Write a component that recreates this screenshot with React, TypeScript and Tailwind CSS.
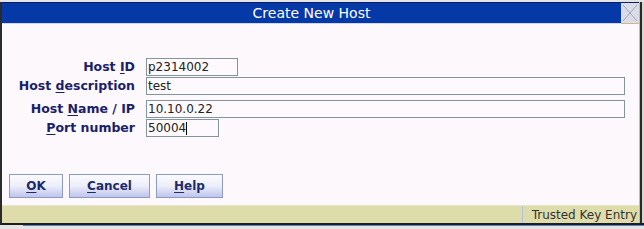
import React from "react";

const font = { fontFamily: '"DejaVu Sans", Verdana, sans-serif' };

function Label({ pre, u, post }: { pre: string; u: string; post: string }) {
  return (
    <div className="w-[133px] text-right text-[12.5px] font-bold text-[#1a1f6b] leading-none whitespace-nowrap">
      {pre}
      <span className="underline underline-offset-2">{u}</span>
      {post}
    </div>
  );
}

function Field({ w, value, cursor }: { w: string; value: string; cursor?: boolean }) {
  return (
    <div
      className={`${w} h-[18px] border border-[#83959a] bg-[#fdf9fd] flex items-center pl-[1px] text-[12px] text-[#222] leading-none`}
    >
      <span>{value}</span>
      {cursor && <span className="inline-block w-[1px] h-[13px] bg-black" />}
    </div>
  );
}

function Btn({ w, u, rest }: { w: string; u: string; rest: string }) {
  return (
    <div
      className={`${w} h-[24px] border border-[#8c9cc0] bg-gradient-to-b from-[#fafaff] via-[#eceef9] to-[#bfc4ec] flex items-center justify-center text-[12px] font-bold text-[#1c2a6c] leading-none`}
    >
      <span className="underline underline-offset-2">{u}</span>
      {rest}
    </div>
  );
}

export default function App() {
  return (
    <div className="w-[644px] h-[229px] bg-[#e4e4e4] overflow-hidden" style={font}>
      <div className="mt-[2px] h-[223px] flex border-l-2 border-[#2a2a2a] border-b-2 border-b-[#1e1e1e]">
        <div className="flex-1 flex flex-col">
          {/* title bar */}
          <div className="h-[22px] flex border-t border-[#0a1f6a]">
            <div className="flex-1 bg-[#0639a8] border-b border-[#d4d8e6] flex items-center justify-center text-white text-[14px] leading-none pb-[1px]">
              Create New Host
            </div>
            <div className="w-[18px] bg-[#dcdbe8] border-b border-[#c8b88a] flex items-center justify-center">
              <svg width="16" height="18" viewBox="0 0 16 18">
                <line x1="1" y1="1" x2="15" y2="17" stroke="#a4a4bc" strokeWidth="1" />
                <line x1="15" y1="1" x2="1" y2="17" stroke="#a4a4bc" strokeWidth="1" />
              </svg>
            </div>
          </div>
          {/* content */}
          <div className="flex-1 bg-[#fcf8fc] flex flex-col pt-[34px]">
            <div className="flex flex-col gap-[1px]">
              <div className="flex items-center">
                <Label pre="Host " u="I" post="D" />
                <div className="ml-[11px]">
                  <Field w="w-[92px]" value="p2314002" />
                </div>
              </div>
              <div className="flex items-center">
                <Label pre="Host " u="d" post="escription" />
                <div className="ml-[11px]">
                  <Field w="w-[479px]" value="test" />
                </div>
              </div>
            </div>
            <div className="flex flex-col gap-[1px] mt-[5px]">
              <div className="flex items-center">
                <Label pre="Host " u="N" post="ame / IP" />
                <div className="ml-[11px]">
                  <Field w="w-[479px]" value="10.10.0.22" />
                </div>
              </div>
              <div className="flex items-center">
                <Label pre="" u="P" post="ort number" />
                <div className="ml-[11px]">
                  <Field w="w-[73px]" value="50004" cursor />
                </div>
              </div>
            </div>
            <div className="flex gap-[6px] pl-[7px] mt-[37px]">
              <Btn w="w-[54px]" u="O" rest="K" />
              <Btn w="w-[81px]" u="C" rest="ancel" />
              <Btn w="w-[67px]" u="H" rest="elp" />
            </div>
          </div>
          {/* status bar */}
          <div className="h-[18px] bg-[#dedcab] flex justify-end border-t border-[#e8e6c8]">
            <div className="w-[117px] border-l border-[#b4c4dc] flex items-center justify-end pr-[2px] text-[12px] text-[#333] leading-none">
              Trusted Key Entry
            </div>
          </div>
        </div>
        <div className="w-[1px] bg-[#c8c088]" />
        <div className="w-[2px] bg-[#2a2a20]" />
        <div className="w-[2px] bg-[#d6d6d6]" />
      </div>
      <div className="h-[1px] ml-[23px] bg-[#5a80c8]" />
    </div>
  );
}
